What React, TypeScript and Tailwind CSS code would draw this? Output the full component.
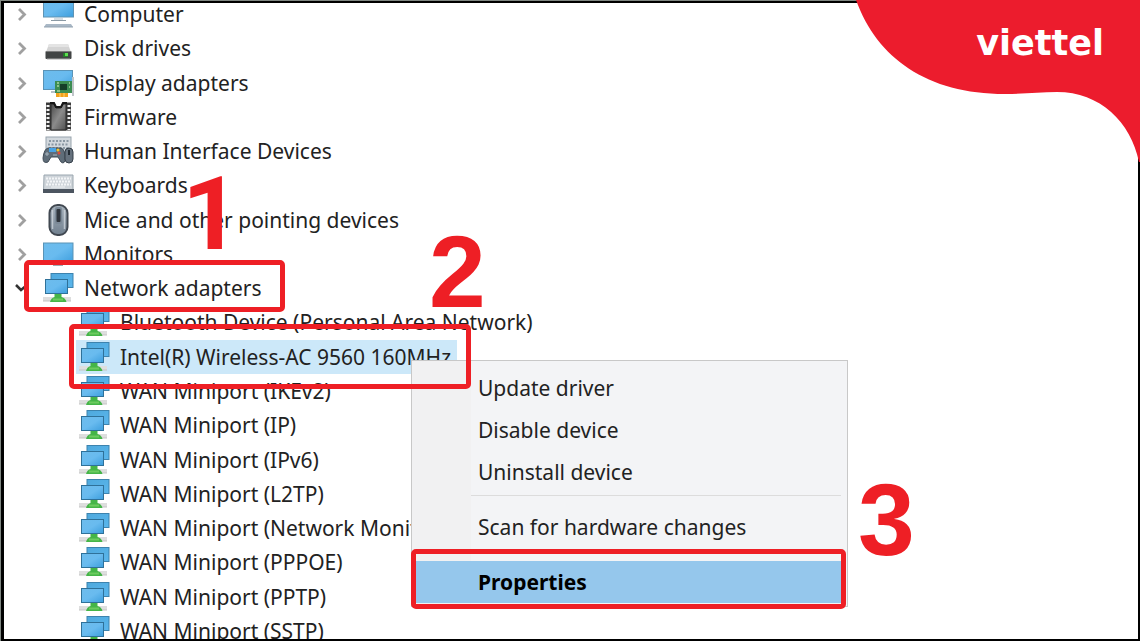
import type { ReactNode } from "react";
import clsx from "clsx";

type IconName = "computer" | "disk" | "display" | "firmware" | "hid" | "keyboard" | "mouse" | "monitor" | "network";

type TreeRow = {
  label: string;
  icon: IconName;
  child?: boolean;
  open?: boolean;
  selected?: boolean;
};

const rows: TreeRow[] = [
  { label: "Computer", icon: "computer" },
  { label: "Disk drives", icon: "disk" },
  { label: "Display adapters", icon: "display" },
  { label: "Firmware", icon: "firmware" },
  { label: "Human Interface Devices", icon: "hid" },
  { label: "Keyboards", icon: "keyboard" },
  { label: "Mice and other pointing devices", icon: "mouse" },
  { label: "Monitors", icon: "monitor" },
  { label: "Network adapters", icon: "network", open: true },
  { label: "Bluetooth Device (Personal Area Network)", icon: "network", child: true },
  { label: "Intel(R) Wireless-AC 9560 160MHz", icon: "network", child: true, selected: true },
  { label: "WAN Miniport (IKEv2)", icon: "network", child: true },
  { label: "WAN Miniport (IP)", icon: "network", child: true },
  { label: "WAN Miniport (IPv6)", icon: "network", child: true },
  { label: "WAN Miniport (L2TP)", icon: "network", child: true },
  { label: "WAN Miniport (Network Monitor)", icon: "network", child: true },
  { label: "WAN Miniport (PPPOE)", icon: "network", child: true },
  { label: "WAN Miniport (PPTP)", icon: "network", child: true },
  { label: "WAN Miniport (SSTP)", icon: "network", child: true },
];

const drawings: Record<IconName, ReactNode> = {
  computer: (
    <>
      <rect x="1.5" y="1" width="30" height="18" fill="url(#screen)" stroke="#5f93b3" />
      <path d="M12 20h9v2h-9z" fill="#d5dde3" />
      <path d="M9 22.5h15" stroke="#8b9aa5" />
      <path d="M4 26h25l2 3H2z" fill="#a9b8c6" />
      <path d="M2 29h29" stroke="#93a3b1" />
    </>
  ),
  disk: (
    <>
      <path d="M7 12h19l3 8H4z" fill="#d4d4d4" />
      <path d="M7 12h19l1 3H6z" fill="#e4e4e4" />
      <rect x="3.5" y="19" width="26" height="8" rx="1" fill="#414444" />
      <path d="M4 19.500h25" stroke="#7c7c7c" />
      <path d="M5 27h23" stroke="#aaa" />
      <rect x="21" y="21" width="5" height="4" fill="#277a2b" />
      <rect x="23" y="21" width="3" height="3" fill="#5be04f" />
    </>
  ),
  display: (
    <>
      <rect x="1.500" y="3.500" width="29" height="19" fill="url(#screen)" stroke="#5a93b6" />
      <path d="M9 24h5v2H9z" fill="#b6c0c8" />
      <rect x="13" y="14" width="17" height="12" fill="#3c8c52" />
      <rect x="18" y="17" width="7" height="6" fill="#173f29" />
      <path d="M15 16h2M15 19h2M27 16h1M27 20h1M15 24h3" stroke="#a9d49e" strokeWidth="1.500" />
      <rect x="14" y="26" width="12" height="4" fill="#f2a21c" />
      <path d="M18 26v4M22 26v4" stroke="#ffd27a" />
      <path d="M31 10v19" stroke="#bfc5c9" strokeWidth="2" />
    </>
  ),
  firmware: (
    <>
      <rect x="4" y="1.500" width="25" height="28" fill="#3a3a3a" />
      <path d="M6 4v25M27 4v25" stroke="#f2f2f2" strokeWidth="3" strokeDasharray="2 2" />
      <path d="M9 3h3l2 4h5l2-4h3v26H9z" fill="url(#chip)" stroke="#2a2a2a" />
      <path d="M12 1h9l-2 4h-5z" fill="#fff" />
      <path d="M8 2h4l2 4h5l2-4h4" stroke="#171717" strokeWidth="2" fill="none" />
    </>
  ),
  hid: (
    <>
      <rect x="4" y="2" width="25" height="16" fill="#d3d9de" stroke="#98a4ad" />
      <path d="M7 6h20M6 9.500h20M7 13h20" stroke="#8b98a3" strokeWidth="2" strokeDasharray="2 1.500" />
      <path d="M6 13h13q4 1 4 10 0 7-4 4l-3-5H9l-3 5q-5 2-5-4 1-9 5-10z" fill="#5f6d79" stroke="#414c57" />
      <rect x="7" y="13" width="7" height="4" fill="#4aa3e3" />
      <circle cx="16" cy="15" r="1.500" fill="#f0c62e" />
      <circle cx="17" cy="18" r="1.500" fill="#e24a3a" />
      <rect x="23" y="13" width="8" height="15" rx="4" fill="#65717d" stroke="#36404a" />
      <path d="M27 15v5" stroke="#222b34" strokeWidth="2" />
      <path d="M3 19h4M5 17v4M11 20h4" stroke="#a8b5bf" />
    </>
  ),
  keyboard: (
    <>
      <path d="M2 6h29v17H1.500z" fill="#cfd5da" stroke="#9aa6af" />
      <path d="M4 9.500h25M5 12.500h24M4 15.500h25" stroke="#f3f5f7" strokeWidth="2" strokeDasharray="2 1" />
      <path d="M9 18h14" stroke="#eef1f3" />
      <rect x="1" y="20" width="31" height="4" fill="#4c5560" />
    </>
  ),
  mouse: (
    <>
      <rect x="7.500" y="1" width="18" height="30" rx="8" fill="url(#shell)" stroke="#414851" strokeWidth="2" />
      <path d="M10.500 6v19M22.500 6v19" stroke="#d7dde2" strokeOpacity="0.700" strokeWidth="1.500" />
      <rect x="13" y="3" width="7" height="17" rx="2" fill="#7b8997" />
      <rect x="14.500" y="5" width="4" height="13" rx="1" fill="#30363d" />
    </>
  ),
  monitor: (
    <>
      <rect x="1.500" y="5" width="29.500" height="20" fill="url(#screen)" stroke="#5a93b6" />
      <path d="M11 27h10" stroke="#9faab2" strokeWidth="2" />
    </>
  ),
  network: (
    <>
      <rect x="1" y="25" width="28" height="4" fill="#dedede" />
      <path d="M1 29h28" stroke="#c4c4c4" />
      <path d="M12.500 22h7v3q4 1 5 5H8q1-4 4.500-5z" fill="#45b548" />
      <path d="M11 27.500h10" stroke="#6ccb5f" strokeWidth="2" />
      <rect x="9" y="1.500" width="22" height="14" fill="url(#screenBack)" stroke="#3d83ae" />
      <rect x="3.500" y="7.500" width="22" height="14" fill="url(#screen)" stroke="#2f7199" />
    </>
  ),
};

function DeviceIcon({ name }: { name: IconName }) {
  return (
    <svg className="size-8 shrink-0" viewBox="0 0 32 32" aria-hidden="true">
      {drawings[name]}
    </svg>
  );
}

function Gradients() {
  return (
    <svg className="absolute size-0" aria-hidden="true">
      <defs>
        <linearGradient id="screen" x1="0" y1="0" x2="1" y2="1">
          <stop offset="0" stopColor="#6dbcec" />
          <stop offset="0.500" stopColor="#69bbef" />
          <stop offset="1" stopColor="#3d9edd" />
        </linearGradient>
        <linearGradient id="screenBack" x1="0" y1="0" x2="1" y2="1">
          <stop offset="0" stopColor="#4fa9dd" />
          <stop offset="1" stopColor="#5ab6ec" />
        </linearGradient>
        <linearGradient id="chip" x1="0" y1="0" x2="1" y2="1">
          <stop offset="0" stopColor="#4a4a4a" />
          <stop offset="0.500" stopColor="#8b8b8b" />
          <stop offset="1" stopColor="#505050" />
        </linearGradient>
        <linearGradient id="shell" x1="0" y1="0" x2="0" y2="1">
          <stop offset="0" stopColor="#a6b1bb" />
          <stop offset="1" stopColor="#71808f" />
        </linearGradient>
      </defs>
    </svg>
  );
}

function Chevron({ open }: { open?: boolean }) {
  return (
    <svg className="h-4 w-[10px] overflow-visible" viewBox="0 0 10 16" fill="none" aria-hidden="true">
      {open ? (
        <path d="M-1 5l5 5 6-5" stroke="#333" strokeWidth="2.500" />
      ) : (
        <path d="M2 3l5.500 5.500L2 14" stroke="#a0a0a0" strokeWidth="2.800" />
      )}
    </svg>
  );
}

function DeviceTree() {
  return (
    <ul className="-mt-[6px] -mb-[9px] grid min-w-0 flex-1 auto-rows-fr">
      {rows.map((row) => (
        <li key={row.label} className={clsx("flex items-stretch", row.child ? "pl-[72px]" : "pl-[13px]")}>
          {!row.child && (
            <button className="mr-[13px] flex items-center" aria-label={row.label} aria-expanded={!!row.open}>
              <Chevron open={row.open} />
            </button>
          )}
          <button
            className={clsx(
              "flex items-center gap-[10px] pr-[6px] pl-[2px] whitespace-nowrap",
              row.selected && "bg-[#cce8f9]"
            )}
          >
            <DeviceIcon name={row.icon} />
            {row.label}
          </button>
        </li>
      ))}
    </ul>
  );
}

function MenuItem({ label, active }: { label: string; active?: boolean }) {
  return (
    <button
      role="menuitem"
      className={clsx("relative h-[42px] pl-[62px] text-left", active && "bg-[#95c7ec] font-bold text-black")}
    >
      {label}
    </button>
  );
}

function MenuDivider() {
  return <hr className="mt-[2px] mr-[2px] mb-[10px] ml-[55px] border-[#dcdcdc]" />;
}

function ContextMenu() {
  return (
    <div
      role="menu"
      className="absolute top-[360px] left-[411px] flex w-[437px] flex-col border border-[#c8c8c8] bg-[#f3f4f6] px-[4px] pt-[6px] pb-[3px]"
    >
      <div className="absolute inset-y-0 left-0 w-[59px] bg-[#f1f1f2]" />
      <MenuItem label="Update driver" />
      <MenuItem label="Disable device" />
      <MenuItem label="Uninstall device" />
      <MenuDivider />
      <MenuItem label="Scan for hardware changes" />
      <MenuDivider />
      <MenuItem label="Properties" active />
    </div>
  );
}

function BrandCorner() {
  return (
    <div className="absolute top-0 right-0 h-[162px] w-[285px]">
      <svg className="absolute inset-0 size-full" viewBox="0 0 285 162" aria-hidden="true">
        <path d="M1 0C22 58 72 94 150 94C170 94 185 92 202 92C245 92 276 122 284 162H285V0z" fill="#ec1c2d" />
      </svg>
      <a
        href="#viettel"
        className="absolute top-[23px] right-[36px] font-['DejaVu_Sans',sans-serif] text-[35px] leading-[40px] font-bold text-white"
      >
        viettel
      </a>
    </div>
  );
}

function Steps() {
  return (
    <div className="pointer-events-none absolute inset-0 font-['Liberation_Sans',sans-serif] text-[102px] leading-[100px] font-bold text-[#ee1f25]">
      <div className="absolute top-[260px] left-[24px] h-[52px] w-[261px] rounded-[5px] border-5 border-current" />
      <div className="absolute top-[324px] left-[69px] h-[65px] w-[402px] rounded-[5px] border-5 border-current" />
      <div className="absolute top-[549px] left-[411px] h-[60px] w-[435px] rounded-[5px] border-5 border-current" />
      <span className="absolute top-[164px] left-[182px] font-['Roboto',sans-serif]">1</span>
      <span className="absolute top-[222px] left-[429px]">2</span>
      <span className="absolute top-[470px] left-[858px]">3</span>
    </div>
  );
}

export default function App() {
  return (
    <div className="relative h-screen overflow-hidden bg-[#808782] pt-px pl-px font-['Noto_Sans',sans-serif] text-[21px] leading-[34px] text-[#222]">
      <Gradients />
      <main className="flex h-full overflow-hidden border-t-2 border-r-2 border-b-2 border-l-3 border-black bg-white">
        <DeviceTree />
      </main>
      <ContextMenu />
      <BrandCorner />
      <Steps />
    </div>
  );
}
